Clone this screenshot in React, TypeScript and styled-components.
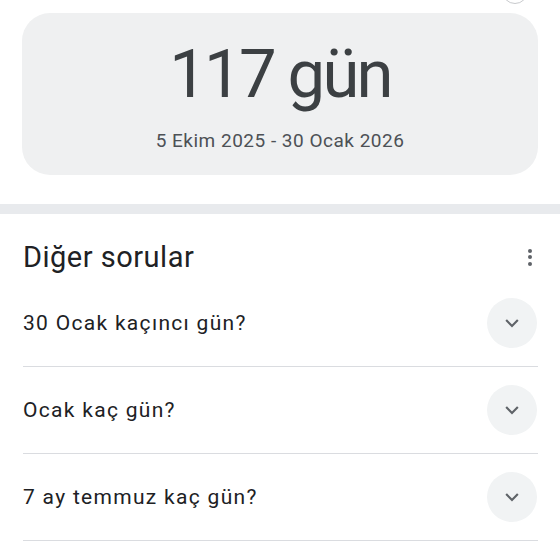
import React from "react";
import styled, { createGlobalStyle } from "styled-components";

const Global = createGlobalStyle`
  html, body { margin: 0; padding: 0; background: #fff; }
  body { font-family: "Roboto", "Noto Sans", sans-serif; color: #202124; }
  * { box-sizing: border-box; }
`;

const Page = styled.div`
  position: relative;
  width: 560px;
  height: 560px;
  overflow: hidden;
  background: #fff;
  padding-top: 13px;
`;

const TopCircle = styled.div`
  position: absolute;
  top: -22px;
  left: 502px;
  width: 26px;
  height: 26px;
  border-radius: 50%;
  border: 1px solid #c8cacd;
`;

const ResultCard = styled.section`
  margin: 0 22px;
  height: 162px;
  border-radius: 28px;
  background: #eff0f1;
  display: flex;
  flex-direction: column;
  align-items: center;
  padding-top: 28px;
`;

const BigValue = styled.div`
  font-size: 67px;
  line-height: 67px;
  color: #3c4043;
  letter-spacing: -2.8px;
`;

const DateRange = styled.div`
  margin-top: 22px;
  font-size: 19px;
  line-height: 22px;
  color: #4d5156;
  letter-spacing: 0.5px;
`;

const Band = styled.div`
  margin-top: 29px;
  height: 10px;
  background: #e8eaed;
`;

const Section = styled.section`
  padding: 0 22px 0 23px;
`;

const Header = styled.div`
  display: flex;
  align-items: center;
  justify-content: space-between;
  height: 66px;
  padding-top: 20px;
`;

const Title = styled.h2`
  margin: 0;
  font-weight: 400;
  font-size: 29px;
  line-height: 46px;
  color: #202124;
  letter-spacing: 0.5px;
`;

const Kebab = styled.div`
  display: flex;
  flex-direction: column;
  gap: 2.5px;
  padding-right: 6px;
  span {
    width: 4px;
    height: 4px;
    border-radius: 50%;
    background: #5f6368;
  }
`;

const Row = styled.div`
  display: flex;
  align-items: center;
  justify-content: space-between;
  height: 87px;
  border-bottom: 1px solid #dadce0;
`;

const Question = styled.span`
  font-size: 21px;
  color: #202124;
  letter-spacing: 1.3px;
`;

const Toggle = styled.div`
  width: 50px;
  height: 50px;
  border-radius: 50%;
  background: #f1f3f4;
  display: flex;
  align-items: center;
  justify-content: center;
  margin-right: 1px;
`;

const Chevron = () => (
  <svg width="20" height="20" viewBox="0 0 24 24">
    <path d="M5 8.5l7 7 7-7" fill="none" stroke="#5f6368" strokeWidth="2.6" />
  </svg>
);

const questions = ["30 Ocak kaçıncı gün?", "Ocak kaç gün?", "7 ay temmuz kaç gün?"];

export default function App() {
  return (
    <Page>
      <Global />
      <TopCircle />
      <ResultCard>
        <BigValue>117 gün</BigValue>
        <DateRange>5 Ekim 2025 - 30 Ocak 2026</DateRange>
      </ResultCard>
      <Band />
      <Section>
        <Header>
          <Title>Diğer sorular</Title>
          <Kebab>
            <span />
            <span />
            <span />
          </Kebab>
        </Header>
        {questions.map((q) => (
          <Row key={q}>
            <Question>{q}</Question>
            <Toggle>
              <Chevron />
            </Toggle>
          </Row>
        ))}
      </Section>
    </Page>
  );
}
